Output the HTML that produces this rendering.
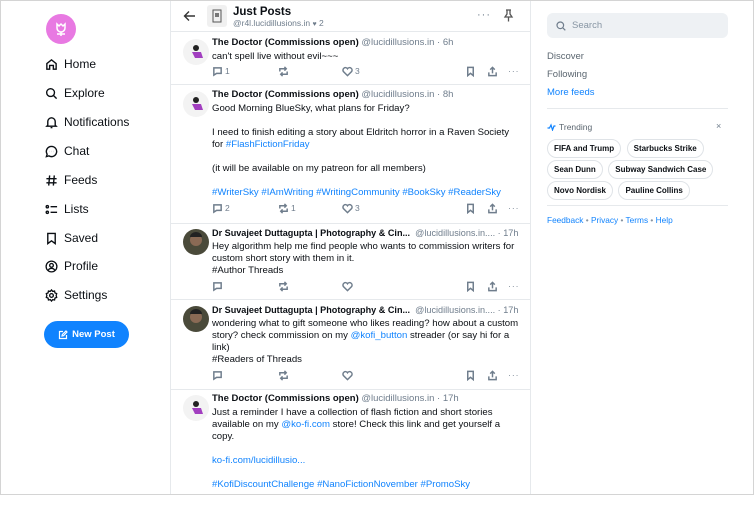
<!DOCTYPE html>
<html><head><meta charset="utf-8"><style>
*{box-sizing:border-box;margin:0;padding:0}
body{width:754px;height:495px;overflow:hidden;background:#fff;font-family:"Liberation Sans",sans-serif;color:#0b0f14;position:relative}
.frame{position:absolute;inset:0;border:1px solid #d4d4d4;pointer-events:none;z-index:9}
.abs{position:absolute}
.nav{position:absolute;left:45px;font-size:12px;display:flex;align-items:center;gap:6px;color:#0b0f14}
.nav svg{width:13px;height:13px}
.col{position:absolute;left:170px;top:0;width:361px;height:495px;border-left:1px solid #e6e9ec;border-right:1px solid #e6e9ec}
.post{position:absolute;left:0;width:359px;border-bottom:1px solid #e6e9ec}
.av{position:absolute;left:12px;width:26px;height:26px;border-radius:50%;background:#f3f3f3;overflow:hidden}
.nm{position:absolute;left:41px;font-size:9.5px;white-space:nowrap;line-height:12px}
.nm b{font-weight:bold}
.nm span{color:#6f7d8c;font-weight:normal}
.nm.s{font-size:9.1px}
.tx{position:absolute;left:41px;font-size:9.6px;line-height:12px;width:310px}
.a{color:#1083fe}
.acts{position:absolute;left:41px;width:310px;height:12px;font-size:8.5px;color:#6f7d8c}
.acts svg{position:absolute;top:0;width:11px;height:11px;fill:none;stroke:#6f7d8c;stroke-width:1.6}
.acts i{position:absolute;top:0;font-style:normal}
.chip{display:inline-block;border:1px solid #dfe3e7;border-radius:10px;font-size:8px;font-weight:bold;padding:4px 6px;margin:0 1px 1px 0;line-height:9px}
</style></head><body>
<div class="frame"></div>
<!-- left nav -->
<div class="abs" style="left:46px;top:14px;width:30px;height:30px;border-radius:50%;background:#e879e2"><svg width="30" height="30" viewBox="0 0 30 30"><g fill="none" stroke="#fff" stroke-width="1.5"><path d="M11 10l2 2 2-2 2 2 2-2v4a4 4 0 0 1-8 0z"/><path d="M15 18v4M11 20h8"/></g></svg></div>
<div class="nav" style="top:57px"><svg viewBox="0 0 14 14" fill="none" stroke="#0b0f14" stroke-width="1.5"><path d="M2 6l5-4 5 4v6H9V8H5v4H2z"/></svg>Home</div>
<div class="nav" style="top:86px"><svg viewBox="0 0 14 14" fill="none" stroke="#0b0f14" stroke-width="1.5"><circle cx="6" cy="6" r="4.2"/><path d="M9 9l3.5 3.5"/></svg>Explore</div>
<div class="nav" style="top:115px"><svg viewBox="0 0 14 14" fill="none" stroke="#0b0f14" stroke-width="1.5"><path d="M3 10V6a4 4 0 0 1 8 0v4l1 1H2z"/><path d="M6 12.5h2"/></svg>Notifications</div>
<div class="nav" style="top:144px"><svg viewBox="0 0 14 14" fill="none" stroke="#0b0f14" stroke-width="1.5"><path d="M7 1.5a5.5 5.5 0 1 1-2.8 10.2L1.5 12.5l.8-2.6A5.5 5.5 0 0 1 7 1.5z"/><path d="M4.5 7h.1M7 7h.1M9.5 7h.1"/></svg>Chat</div>
<div class="nav" style="top:173px"><svg viewBox="0 0 14 14" fill="none" stroke="#0b0f14" stroke-width="1.5"><path d="M5 1.5L4 12.5M10 1.5L9 12.5M1.5 5h11M1.5 9.5h11"/></svg>Feeds</div>
<div class="nav" style="top:202px"><svg viewBox="0 0 14 14" fill="none" stroke="#0b0f14" stroke-width="1.5"><circle cx="2.5" cy="4" r="1.2"/><circle cx="2.5" cy="10" r="1.2"/><path d="M6 4h7M6 10h7"/></svg>Lists</div>
<div class="nav" style="top:231px"><svg viewBox="0 0 14 14" fill="none" stroke="#0b0f14" stroke-width="1.5"><path d="M3 1.5h8v11l-4-3-4 3z"/></svg>Saved</div>
<div class="nav" style="top:259px"><svg viewBox="0 0 14 14" fill="none" stroke="#0b0f14" stroke-width="1.4"><circle cx="7" cy="7" r="5.8"/><circle cx="7" cy="5.8" r="2"/><path d="M3.5 11a4 4 0 0 1 7 0"/></svg>Profile</div>
<div class="nav" style="top:288px"><svg viewBox="0 0 14 14" fill="none" stroke="#0b0f14" stroke-width="1.4"><circle cx="7" cy="7" r="2"/><path d="M7 1l1.3 1.6 2-.4.4 2L12.6 5 12 7l.6 2-1.9.8-.4 2-2-.4L7 13l-1.3-1.6-2 .4-.4-2L1.4 9 2 7l-.6-2 1.9-.8.4-2 2 .4z"/></svg>Settings</div>
<div class="abs" style="left:44px;top:321px;width:85px;height:27px;border-radius:14px;background:#1083fe;color:#fff;font-size:9.5px;font-weight:bold;display:flex;align-items:center;justify-content:center;gap:4px"><svg width="10" height="10" viewBox="0 0 10 10" fill="none" stroke="#fff" stroke-width="1.2"><path d="M5 1.5H1.5v7h7V5"/><path d="M4 6l.3-1.5L8 1l1 1-3.5 3.7z"/></svg>New Post</div>

<!-- center -->
<div class="col">
 <svg class="abs" style="left:12px;top:10px" width="13" height="12" viewBox="0 0 13 12" fill="none" stroke="#333" stroke-width="1.4"><path d="M12 6H1.5M6 1.5L1.5 6 6 10.5"/></svg>
 <div class="abs" style="left:36px;top:5px;width:20px;height:22px;background:#f0f0f0;border-radius:3px"><svg width="20" height="22" viewBox="0 0 20 22"><rect x="6" y="5" width="8" height="12" fill="none" stroke="#555" stroke-width="1"/><rect x="8" y="8" width="4" height="4" fill="#777"/></svg></div>
 <div class="abs" style="left:62px;top:6px;font-size:11.5px;font-weight:bold">Just Posts</div>
 <div class="abs" style="left:62px;top:18px;font-size:8.5px;color:#6f7d8c">@r4l.lucidillusions.in <span style="font-size:7px">♥</span> 2</div>
 <div class="abs" style="left:306px;top:9px;font-size:11px;color:#6f7d8c;letter-spacing:1px">···</div>
 <svg class="abs" style="left:332px;top:9px" width="11" height="13" viewBox="0 0 11 13" fill="none" stroke="#555" stroke-width="1.3"><path d="M3 1h5M4 1v4L2 8h7L7 5V1M5.5 8v4.5"/></svg>
 <div class="abs" style="left:0;top:31px;width:359px;border-top:1px solid #e6e9ec"></div>

 <div class="post" style="top:32px;height:53px">
  <div class="av" style="top:7px"><svg width="26" height="26"><circle cx="13" cy="9" r="3" fill="#222"/><path d="M9 13h9l2 6h-8z" fill="#a23fc0"/></svg></div>
  <div class="nm" style="top:5px"><b>The Doctor (Commissions open)</b> <span>@lucidillusions.in · 6h</span></div>
  <div class="tx" style="top:19px">can't spell live without evil~~~</div>
  <div class="acts" style="top:34px"><svg style="left:0" viewBox="0 0 12 12"><path d="M2 2h8v6H5l-3 2z"/></svg><i style="left:13px">1</i><svg style="left:66px" viewBox="0 0 12 12"><path d="M2 6V3h7M7 1l2 2-2 2M10 6v3H3M5 11L3 9l2-2"/></svg><svg style="left:130px" viewBox="0 0 12 12"><path d="M6 10.5L1.5 6A2.4 2.4 0 0 1 6 3a2.4 2.4 0 0 1 4.5 3z"/></svg><i style="left:143px">3</i><svg style="left:253px" viewBox="0 0 12 12"><path d="M3 1.5h6v9L6 8l-3 2.5z"/></svg><svg style="left:275px" viewBox="0 0 12 12"><path d="M6 8V1.5M3.5 4L6 1.5 8.5 4M2 7v3.5h8V7"/></svg><i style="left:296px;letter-spacing:1px">···</i></div>
 </div>
 <div class="post" style="top:85px;height:139px">
  <div class="av" style="top:6px"><svg width="26" height="26"><circle cx="13" cy="9" r="3" fill="#222"/><path d="M9 13h9l2 6h-8z" fill="#a23fc0"/></svg></div>
  <div class="nm" style="top:4px"><b>The Doctor (Commissions open)</b> <span>@lucidillusions.in · 8h</span></div>
  <div class="tx" style="top:18px">Good Morning BlueSky, what plans for Friday?<br><br>I need to finish editing a story about Eldritch horror in a Raven Society for <span class="a">#FlashFictionFriday</span><br><br>(it will be available on my patreon for all members)<br><br><span class="a">#WriterSky #IAmWriting #WritingCommunity #BookSky #ReaderSky</span></div>
  <div class="acts" style="top:118px"><svg style="left:0" viewBox="0 0 12 12"><path d="M2 2h8v6H5l-3 2z"/></svg><i style="left:13px">2</i><svg style="left:66px" viewBox="0 0 12 12"><path d="M2 6V3h7M7 1l2 2-2 2M10 6v3H3M5 11L3 9l2-2"/></svg><i style="left:79px">1</i><svg style="left:130px" viewBox="0 0 12 12"><path d="M6 10.5L1.5 6A2.4 2.4 0 0 1 6 3a2.4 2.4 0 0 1 4.5 3z"/></svg><i style="left:143px">3</i><svg style="left:253px" viewBox="0 0 12 12"><path d="M3 1.5h6v9L6 8l-3 2.5z"/></svg><svg style="left:275px" viewBox="0 0 12 12"><path d="M6 8V1.5M3.5 4L6 1.5 8.5 4M2 7v3.5h8V7"/></svg><i style="left:296px;letter-spacing:1px">···</i></div>
 </div>
 <div class="post" style="top:224px;height:76px">
  <div class="av" style="top:5px;background:#4a4a3a"><svg width="26" height="26"><circle cx="13" cy="11" r="6" fill="#8a6a55"/><path d="M7 8a6 5 0 0 1 12 0z" fill="#222"/></svg></div>
  <div class="nm s" style="top:3px"><b>Dr Suvajeet Duttagupta | Photography &amp; Cin...</b> <span>&nbsp;@lucidillusions.in.... · 17h</span></div>
  <div class="tx" style="top:17px">Hey algorithm help me find people who wants to commission writers for custom short story with them in it.<br>#Author Threads</div>
  <div class="acts" style="top:57px"><svg style="left:0" viewBox="0 0 12 12"><path d="M2 2h8v6H5l-3 2z"/></svg><svg style="left:66px" viewBox="0 0 12 12"><path d="M2 6V3h7M7 1l2 2-2 2M10 6v3H3M5 11L3 9l2-2"/></svg><svg style="left:130px" viewBox="0 0 12 12"><path d="M6 10.5L1.5 6A2.4 2.4 0 0 1 6 3a2.4 2.4 0 0 1 4.5 3z"/></svg><svg style="left:253px" viewBox="0 0 12 12"><path d="M3 1.5h6v9L6 8l-3 2.5z"/></svg><svg style="left:275px" viewBox="0 0 12 12"><path d="M6 8V1.5M3.5 4L6 1.5 8.5 4M2 7v3.5h8V7"/></svg><i style="left:296px;letter-spacing:1px">···</i></div>
 </div>
 <div class="post" style="top:300px;height:90px">
  <div class="av" style="top:6px;background:#4a4a3a"><svg width="26" height="26"><circle cx="13" cy="11" r="6" fill="#8a6a55"/><path d="M7 8a6 5 0 0 1 12 0z" fill="#222"/></svg></div>
  <div class="nm s" style="top:4px"><b>Dr Suvajeet Duttagupta | Photography &amp; Cin...</b> <span>&nbsp;@lucidillusions.in.... · 17h</span></div>
  <div class="tx" style="top:18px">wondering what to gift someone who likes reading? how about a custom story? check commission on my <span class="a">@kofi_button</span> streader (or say hi for a link)<br>#Readers of Threads</div>
  <div class="acts" style="top:70px"><svg style="left:0" viewBox="0 0 12 12"><path d="M2 2h8v6H5l-3 2z"/></svg><svg style="left:66px" viewBox="0 0 12 12"><path d="M2 6V3h7M7 1l2 2-2 2M10 6v3H3M5 11L3 9l2-2"/></svg><svg style="left:130px" viewBox="0 0 12 12"><path d="M6 10.5L1.5 6A2.4 2.4 0 0 1 6 3a2.4 2.4 0 0 1 4.5 3z"/></svg><svg style="left:253px" viewBox="0 0 12 12"><path d="M3 1.5h6v9L6 8l-3 2.5z"/></svg><svg style="left:275px" viewBox="0 0 12 12"><path d="M6 8V1.5M3.5 4L6 1.5 8.5 4M2 7v3.5h8V7"/></svg><i style="left:296px;letter-spacing:1px">···</i></div>
 </div>
 <div class="post" style="top:390px;height:120px;border-bottom:none">
  <div class="av" style="top:5px"><svg width="26" height="26"><circle cx="13" cy="9" r="3" fill="#222"/><path d="M9 13h9l2 6h-8z" fill="#a23fc0"/></svg></div>
  <div class="nm" style="top:3px"><b>The Doctor (Commissions open)</b> <span>@lucidillusions.in · 17h</span></div>
  <div class="tx" style="top:17px">Just a reminder I have a collection of flash fiction and short stories available on my <span class="a">@ko-fi.com</span> store! Check this link and get yourself a copy.<br><br><span class="a">ko-fi.com/lucidillusio...</span><br><br><span class="a">#KofiDiscountChallenge #NanoFictionNovember #PromoSky</span></div>
 </div>
</div>

<!-- right -->
<div class="abs" style="left:547px;top:13px;width:181px;height:25px;background:#eef1f4;border-radius:6px;font-size:9.5px;color:#8795a3;display:flex;align-items:center;padding-left:9px;gap:6px"><svg width="10" height="10" viewBox="0 0 10 10" fill="none" stroke="#6f7d8c" stroke-width="1.2"><circle cx="4.3" cy="4.3" r="3.3"/><path d="M6.8 6.8L9.3 9.3"/></svg>Search</div>
<div class="abs" style="left:547px;top:51px;font-size:9.5px;color:#5b6670">Discover</div>
<div class="abs" style="left:547px;top:69px;font-size:9.5px;color:#5b6670">Following</div>
<div class="abs" style="left:547px;top:87px;font-size:9.5px;color:#1083fe">More feeds</div>
<div class="abs" style="left:547px;top:108px;width:181px;border-top:1px solid #e6e9ec"></div>
<div class="abs" style="left:547px;top:122px;font-size:8.5px;color:#5b6670;display:flex;align-items:center;gap:3px"><svg width="9" height="8" viewBox="0 0 9 8" fill="none" stroke="#1083fe" stroke-width="1.2"><path d="M0.5 5h2l1.5-3 1.5 5 1.5-4h1.5"/></svg>Trending</div>
<div class="abs" style="left:716px;top:121px;font-size:9px;color:#6f7d8c">×</div>
<div class="abs" style="left:547px;top:138px;width:190px;line-height:18px">
<span class="chip">FIFA and Trump</span> <span class="chip">Starbucks Strike</span><br><span class="chip">Sean Dunn</span> <span class="chip">Subway Sandwich Case</span><br><span class="chip">Novo Nordisk</span> <span class="chip">Pauline Collins</span></div>
<div class="abs" style="left:547px;top:205px;width:181px;border-top:1px solid #e6e9ec"></div>
<div class="abs" style="left:547px;top:215px;font-size:8.3px;color:#1083fe">Feedback <span style="color:#8795a3">•</span> Privacy <span style="color:#8795a3">•</span> Terms <span style="color:#8795a3">•</span> Help</div>
</body></html>
